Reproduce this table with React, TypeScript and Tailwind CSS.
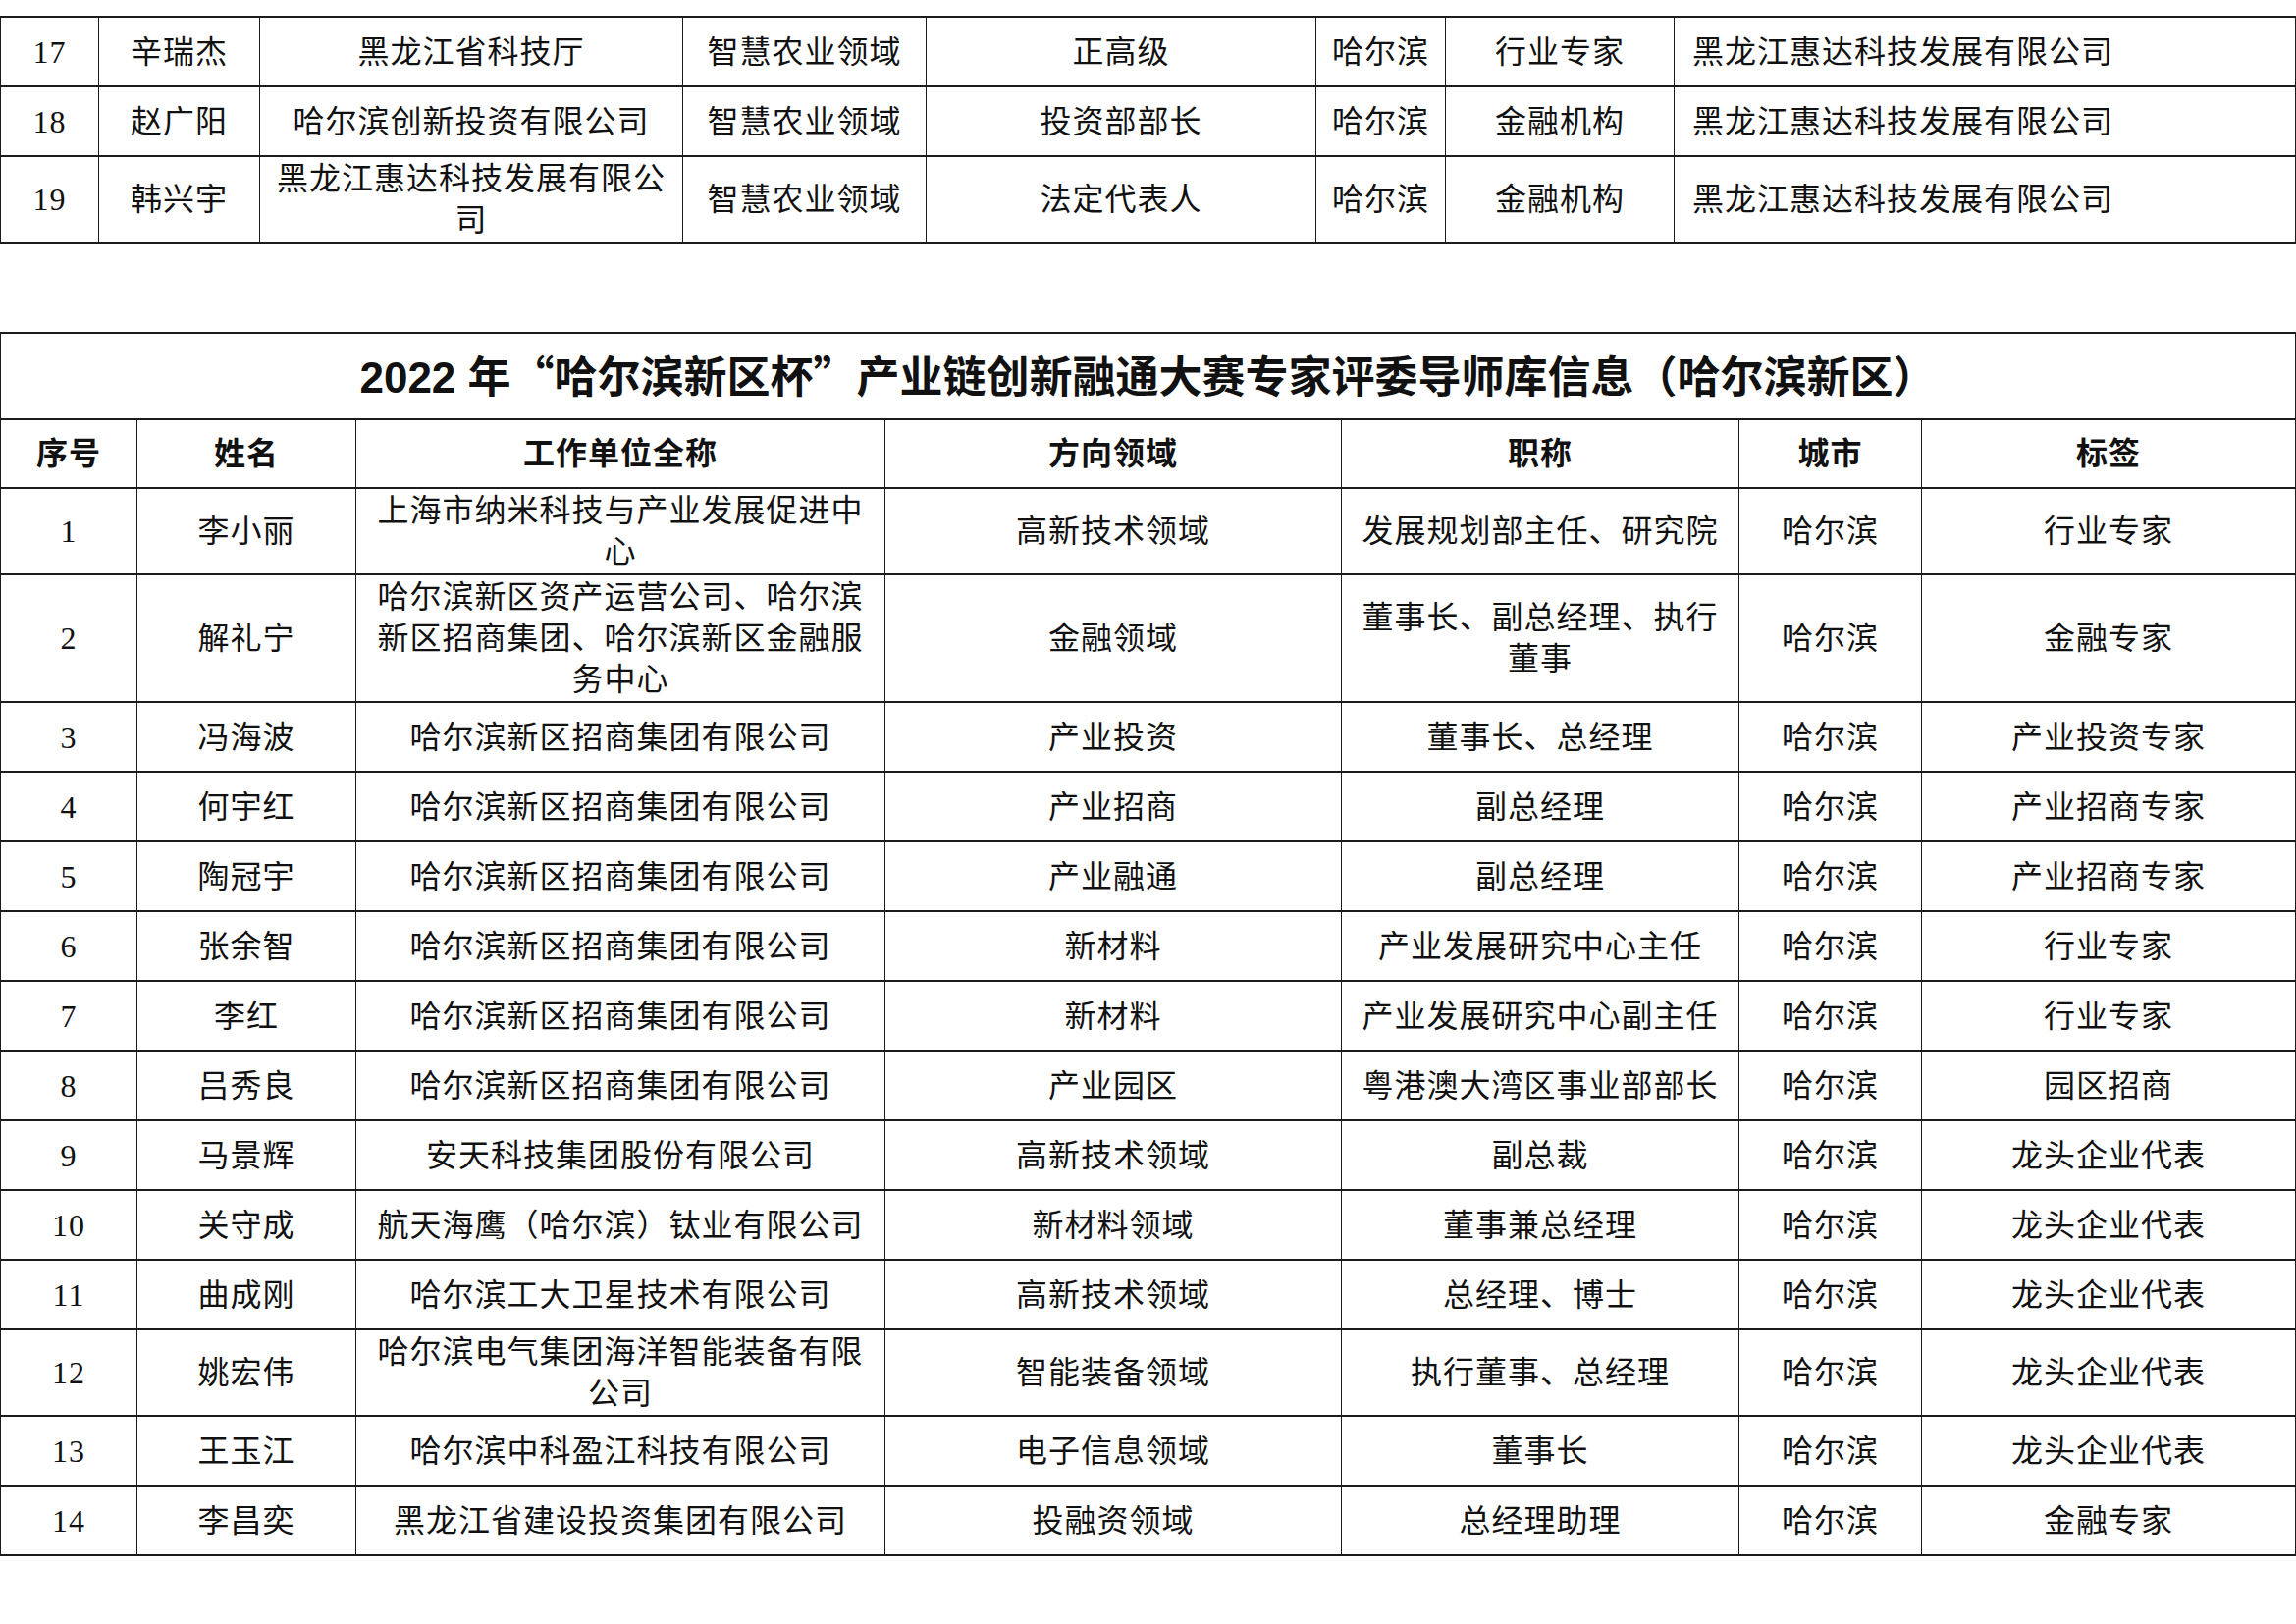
import React from 'react';

const font = "font-['Liberation_Serif','Noto_Sans_CJK_SC',serif]";
const cell = 'border-x border-y-2 border-[#1c1c1c] px-[16px] py-[1px] text-center align-middle';

const prevRows = [
  ['17', '辛瑞杰', '黑龙江省科技厅', '智慧农业领域', '正高级', '哈尔滨', '行业专家', '黑龙江惠达科技发展有限公司'],
  ['18', '赵广阳', '哈尔滨创新投资有限公司', '智慧农业领域', '投资部部长', '哈尔滨', '金融机构', '黑龙江惠达科技发展有限公司'],
  ['19', '韩兴宇', '黑龙江惠达科技发展有限公司', '智慧农业领域', '法定代表人', '哈尔滨', '金融机构', '黑龙江惠达科技发展有限公司'],
];
const prevCols = [100, 164, 431, 248, 397, 132, 233, 633];

const headers = ['序号', '姓名', '工作单位全称', '方向领域', '职称', '城市', '标签'];
const cols = [139, 223, 539, 465, 405, 186, 381];

const rows = [
  ['1', '李小丽', '上海市纳米科技与产业发展促进中心', '高新技术领域', '发展规划部主任、研究院', '哈尔滨', '行业专家'],
  ['2', '解礼宁', '哈尔滨新区资产运营公司、哈尔滨新区招商集团、哈尔滨新区金融服务中心', '金融领域', '董事长、副总经理、执行董事', '哈尔滨', '金融专家'],
  ['3', '冯海波', '哈尔滨新区招商集团有限公司', '产业投资', '董事长、总经理', '哈尔滨', '产业投资专家'],
  ['4', '何宇红', '哈尔滨新区招商集团有限公司', '产业招商', '副总经理', '哈尔滨', '产业招商专家'],
  ['5', '陶冠宇', '哈尔滨新区招商集团有限公司', '产业融通', '副总经理', '哈尔滨', '产业招商专家'],
  ['6', '张余智', '哈尔滨新区招商集团有限公司', '新材料', '产业发展研究中心主任', '哈尔滨', '行业专家'],
  ['7', '李红', '哈尔滨新区招商集团有限公司', '新材料', '产业发展研究中心副主任', '哈尔滨', '行业专家'],
  ['8', '吕秀良', '哈尔滨新区招商集团有限公司', '产业园区', '粤港澳大湾区事业部部长', '哈尔滨', '园区招商'],
  ['9', '马景辉', '安天科技集团股份有限公司', '高新技术领域', '副总裁', '哈尔滨', '龙头企业代表'],
  ['10', '关守成', '航天海鹰（哈尔滨）钛业有限公司', '新材料领域', '董事兼总经理', '哈尔滨', '龙头企业代表'],
  ['11', '曲成刚', '哈尔滨工大卫星技术有限公司', '高新技术领域', '总经理、博士', '哈尔滨', '龙头企业代表'],
  ['12', '姚宏伟', '哈尔滨电气集团海洋智能装备有限公司', '智能装备领域', '执行董事、总经理', '哈尔滨', '龙头企业代表'],
  ['13', '王玉江', '哈尔滨中科盈江科技有限公司', '电子信息领域', '董事长', '哈尔滨', '龙头企业代表'],
  ['14', '李昌奕', '黑龙江省建设投资集团有限公司', '投融资领域', '总经理助理', '哈尔滨', '金融专家'],
];

export default function App() {
  return (
    <div className={`min-h-screen bg-white text-[#111] ${font} text-[32px] leading-[42px] tracking-[1px]`}>
      <div className="pt-[16px]">
        <table className="table-fixed border-collapse w-[2338px]">
          <colgroup>
            {prevCols.map((w, i) => (
              <col key={i} style={{ width: w }} />
            ))}
          </colgroup>
          <tbody>
            {prevRows.map((r) => (
              <tr key={r[0]} className="h-[71px]">
                {r.map((c, i) => (
                  <td key={i} className={i === 7 ? `${cell} !text-left !px-[18px]` : cell}>
                    {c}
                  </td>
                ))}
              </tr>
            ))}
          </tbody>
        </table>
      </div>

      <div className="mt-[90px]">
        <table className="table-fixed border-collapse w-[2338px]">
          <colgroup>
            {cols.map((w, i) => (
              <col key={i} style={{ width: w }} />
            ))}
          </colgroup>
          <thead>
            <tr className="h-[88px]">
              <th colSpan={7} className={`${cell} font-bold text-[44px] tracking-normal`}>
                <span className="font-['Liberation_Sans_Narrow','Liberation_Sans',sans-serif]">2022 </span>
                <span className="font-['Noto_Sans_CJK_SC',sans-serif]">年“哈尔滨新区杯”产业链创新融通大赛专家评委导师库信息（哈尔滨新区）</span>
              </th>
            </tr>
            <tr className="h-[70px]">
              {headers.map((h) => (
                <th key={h} className={`${cell} font-bold`}>
                  {h}
                </th>
              ))}
            </tr>
          </thead>
          <tbody>
            {rows.map((r) => (
              <tr key={r[0]} className="h-[71px]">
                {r.map((c, i) => (
                  <td key={i} className={cell}>
                    {c}
                  </td>
                ))}
              </tr>
            ))}
          </tbody>
        </table>
      </div>
    </div>
  );
}
